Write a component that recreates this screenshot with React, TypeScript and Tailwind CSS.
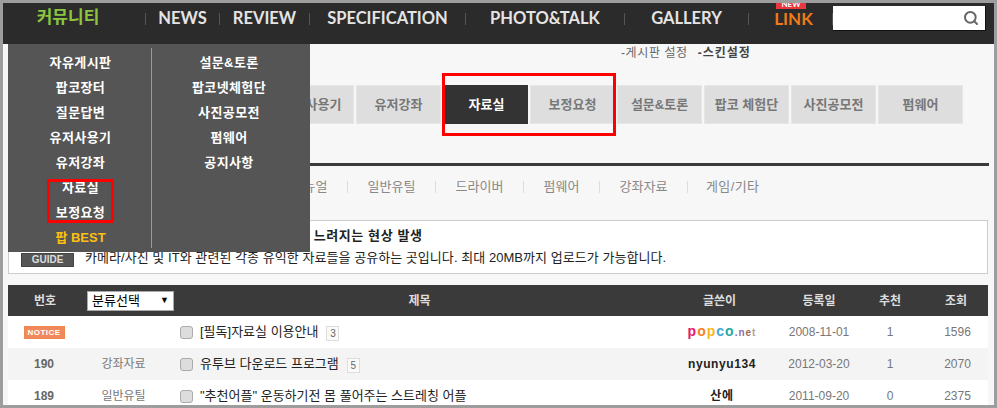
import React from 'react';
import { Search } from 'lucide-react';

const kr = "font-['Liberation_Sans','Noto_Sans_CJK_KR',sans-serif]";

const navItems = [
  { label: 'NEWS', width: 'w-[73px]' },
  { label: 'REVIEW', width: 'w-[89px]' },
  { label: 'SPECIFICATION', width: 'w-[155px]' },
  { label: 'PHOTO&TALK', width: 'w-[158px]' },
  { label: 'GALLERY', width: 'w-[123px]' },
];

const tabs = ['자유게시판', '팝코장터', '질문답변', '유저사용기', '유저강좌', '자료실', '보정요청', '설문&토론', '팝코 체험단', '사진공모전', '펌웨어'];
const subMenu = [
  { label: '매뉴얼', width: 'w-[76px]' },
  { label: '일반유틸', width: 'w-[88px]' },
  { label: '드라이버', width: 'w-[88px]' },
  { label: '펌웨어', width: 'w-[76px]' },
  { label: '강좌자료', width: 'w-[88px]' },
  { label: '게임/기타', width: 'w-[100px]' },
];
const leftMenu = ['자유게시판', '팝코장터', '질문답변', '유저사용기', '유저강좌', '자료실', '보정요청'];
const rightMenu = ['설문&토론', '팝코넷체험단', '사진공모전', '펌웨어', '공지사항'];

const rows = [
  { no: '', cat: '', title: '[필독]자료실 이용안내', count: 3, author: 'popco', date: '2008-11-01', rec: 1, views: 1596 },
  { no: '190', cat: '강좌자료', title: '유투브 다운로드 프로그램', count: 5, author: 'nyunyu134', date: '2012-03-20', rec: 1, views: 2070 },
  { no: '189', cat: '일반유틸', title: '"추천어플" 운동하기전 몸 풀어주는 스트레칭 어플', count: 0, author: '산에', date: '2011-09-20', rec: 0, views: 2375 },
];

const gridCols = 'grid grid-cols-[74px_98px_479px_126px_68px_74px_61px] items-center text-center';

const PopcoLogo = () => (
  <span className="font-['Liberation_Sans',sans-serif] text-[14px] font-bold leading-none tracking-[1px]">
    <span className="text-[#e6176f]">p</span>
    <span className="text-[#f58220]">o</span>
    <span className="text-[#f9b81c]">p</span>
    <span className="text-[#3ba7d9]">c</span>
    <span className="text-[#29a8a0]">o</span>
    <span className="text-[10px] text-[#8a6fb0]">.n</span>
    <span className="text-[10px] text-[#a06a50]">e</span>
    <span className="text-[10px] text-[#b0a090]">t</span>
  </span>
);

export default function App() {
  return (
    <div className={`relative h-[408px] w-[997px] overflow-hidden border-[3px] border-[#9d9d9d] bg-[#f7f7f7] ${kr}`}>
      {/* top nav */}
      <nav className="flex h-[41px] items-center bg-[#2b2b2b] pb-[10px] font-['Lato',sans-serif] text-[16.5px] font-bold text-[#e4e4e4]">
        <div className={`w-[142px] pb-[2px] pr-[12px] text-center text-[17px] font-bold text-[#8cc63f] ${kr}`}>커뮤니티</div>
        {navItems.map((item) => (
          <React.Fragment key={item.label}>
            <span className="h-[12px] w-px bg-[#555]" />
            <div className={`${item.width} text-center`}>{item.label}</div>
          </React.Fragment>
        ))}
        <span className="h-[12px] w-px bg-[#555]" />
        <div className="relative w-[83px] pl-[6px] text-center text-[17px] text-[#f07a1a]">
          LINK
          <span className="absolute left-[27px] top-[-6px] h-[9px] w-[30px] bg-[#e8383d] text-[8px] leading-[9px] text-white">NEW</span>
        </div>
        <span className="h-[12px] w-px bg-[#555]" />
        <div className="flex h-[25px] w-[153px] items-center justify-end border-b border-r border-[#111] bg-white pr-[6px]">
          <Search size={16} strokeWidth={3} className="text-[#666]" />
        </div>
      </nav>

      <main className="px-[5px]">
        <div className="h-[41px] pl-[613px] pt-[2px] text-[12px] leading-[14px] tracking-[0.6px] text-[#666]">
          <span>-게시판 설정</span>
          <span className="ml-[10px] font-bold tracking-[1px] text-[#444]">-스킨설정</span>
        </div>

        {/* tabs */}
        <div className="flex h-[39px] gap-[2px]">
          {tabs.map((tab) =>
            tab === '자료실' ? (
              <div key={tab} className="ml-[2px] flex w-[83px] items-center justify-center bg-[#333] text-[13px] font-bold text-white">
                {tab}
              </div>
            ) : (
              <div key={tab} className="flex w-[85px] items-center justify-center border border-[#e6e6e6] bg-[#dedede] text-[13px] font-bold text-[#777]">
                {tab}
              </div>
            ),
          )}
        </div>

        <div className="mt-[39px] h-[3px] bg-[#3a3a3a]" />

        {/* category links */}
        <div className="flex h-[54px] items-center pb-[12px] pl-[264px] text-[13px] text-[#888]">
          {subMenu.map((item, index) => (
            <div key={item.label} className={`${item.width} flex h-[12px] items-center ${index === 5 ? 'justify-start pl-[18px] tracking-[0.4px]' : 'justify-center'} border-r border-[#ddd] last:border-r-0`}>
              {item.label}
            </div>
          ))}
        </div>

        {/* guide box */}
        <div className="h-[54px] w-[980px] border border-[#ccc] bg-white pl-[75px] pt-[5px] text-[13px] leading-[20px] text-[#222]">
          <div className="whitespace-nowrap pl-[16px] font-bold tracking-[0.6px]">자료실 게시물 열람 시 속도가 떨어질 느려지는 현상 발생</div>
          <div className="mt-[2px] flex items-center">
            <span className="absolute left-[18px] mt-[4px] h-[14px] w-[53px] border border-[#444] bg-[#555] text-center text-[10px] font-bold leading-[12px] text-[#ddd]">GUIDE</span>
            <span className="pl-[1px] tracking-[0.05px]">카메라/사진 및 IT와 관련된 각종 유익한 자료들을 공유하는 곳입니다. 최대 20MB까지 업로드가 가능합니다.</span>
          </div>
        </div>

        {/* board */}
        <div className="mt-[11px] w-[980px]">
          <div className={`${gridCols} h-[31px] bg-[#3a3a3a] text-[12px] font-bold text-[#ddd]`}>
            <div>번호</div>
            <div className="flex justify-start pl-[5px]">
              <div className="flex h-[20px] w-[87px] items-center justify-between border border-[#aaa] bg-white px-[4px] text-[13px] font-normal text-black">
                <span>분류선택</span>
                <span className="text-[9px]">▼</span>
              </div>
            </div>
            <div>제목</div>
            <div className="pr-[5px]">글쓴이</div>
            <div>등록일</div>
            <div>추천</div>
            <div className="pr-[3px]">조회</div>
          </div>
          {rows.map((row, index) => (
            <div key={row.title} className={`${gridCols} h-[32px] text-[12px] text-[#777] ${index === 1 ? 'bg-[#f4f4f4]' : 'bg-white'}`}>
              <div className="flex justify-center pr-[2px] font-bold text-[#666]">
                {row.no || (
                  <span className="h-[13px] w-[41px] border border-[#f0854f] bg-[#f08a5d] font-['Liberation_Sans',sans-serif] text-[8px] font-bold leading-[11px] tracking-[0.5px] text-white">NOTICE</span>
                )}
              </div>
              <div className="pr-[15px]">{row.cat}</div>
              <div className="flex items-center justify-start text-[13px] text-[#222]">
                <span className="h-[13px] w-[13px] rounded-[3px] border border-[#aaa] bg-[#ddd]" />
                <span className="ml-[7px]">{row.title}</span>
                {row.count > 0 && (
                  <span className="ml-[8px] mt-[2px] h-[15px] w-[13px] border border-[#ddd] bg-[#fafafa] text-[10px] leading-[13px] text-[#666]">{row.count}</span>
                )}
              </div>
              <div className="text-[12px] font-bold tracking-[0.6px] text-[#222]">
                {row.author === 'popco' ? <PopcoLogo /> : row.author}
              </div>
              <div>{row.date}</div>
              <div>{row.rec}</div>
              <div>{row.views}</div>
            </div>
          ))}
        </div>
      </main>

      {/* community dropdown */}
      <div className="absolute left-[5px] top-[41px] flex h-[208px] w-[302px] bg-[#555] py-[4px] text-[13px] font-bold tracking-[0.4px] text-white">
        <div className="w-[144px] border-r border-[#999] pl-[2px]">
          <ul className="mt-[3px] text-center">
            {leftMenu.map((item) => (
              <li key={item} className="h-[25px] pt-[2px] leading-[20px]">{item}</li>
            ))}
            <li className="h-[25px] pt-[2px] leading-[20px] tracking-normal text-[#fdbf12]">팝 BEST</li>
          </ul>
        </div>
        <ul className="mt-[3px] flex-1 pr-[4px] text-center">
          {rightMenu.map((item) => (
            <li key={item} className="h-[25px] pt-[2px] leading-[20px]">{item}</li>
          ))}
        </ul>
      </div>

      {/* red callouts */}
      <div className="absolute left-[439px] top-[70px] h-[63px] w-[174px] border-[3px] border-[#f00]" />
      <div className="absolute left-[44px] top-[176px] h-[44px] w-[67px] border-[3px] border-[#f00]" />
    </div>
  );
}
